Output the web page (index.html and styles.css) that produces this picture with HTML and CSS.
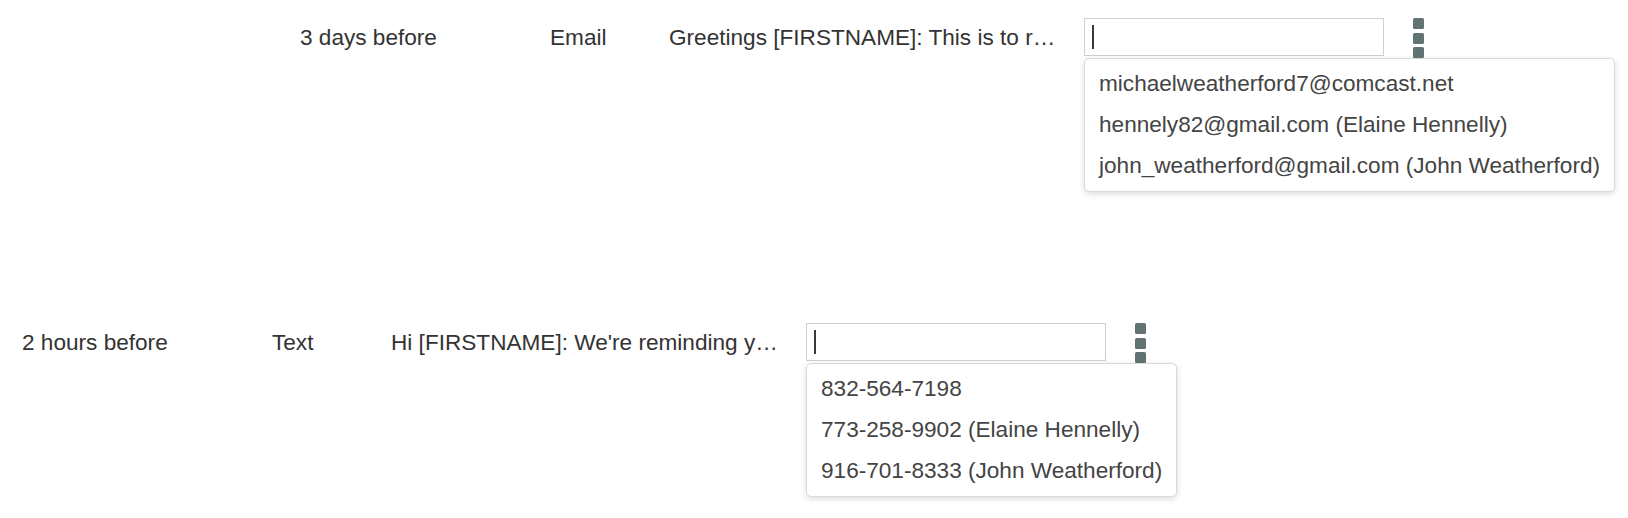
FILE: index.html
```html
<!DOCTYPE html>
<html lang="en">
<head>
<meta charset="utf-8">
<title>Reminders</title>
<link rel="stylesheet" href="styles.css">
</head>
<body>
<div class="list">
  <div class="reminder reminder--indent">
    <div class="cell when">3 days before</div>
    <div class="cell kind">Email</div>
    <div class="cell msg">Greetings [FIRSTNAME]: This is to remind you of your upcoming appointment.</div>
    <div class="recipient">
      <div class="field"><span class="caret"></span></div>
      <ul class="suggest">
        <li class="suggest-item">michaelweatherford7@comcast.net</li>
        <li class="suggest-item">hennely82@gmail.com (Elaine Hennelly)</li>
        <li class="suggest-item">john_weatherford@gmail.com (John Weatherford)</li>
      </ul>
    </div>
    <div class="menu"><span class="dot"></span><span class="dot"></span><span class="dot"></span></div>
  </div>
  <div class="reminder">
    <div class="cell when">2 hours before</div>
    <div class="cell kind">Text</div>
    <div class="cell msg">Hi [FIRSTNAME]: We're reminding you of your appointment today.</div>
    <div class="recipient">
      <div class="field"><span class="caret"></span></div>
      <ul class="suggest">
        <li class="suggest-item">832-564-7198</li>
        <li class="suggest-item">773-258-9902 (Elaine Hennelly)</li>
        <li class="suggest-item">916-701-8333 (John Weatherford)</li>
      </ul>
    </div>
    <div class="menu"><span class="dot"></span><span class="dot"></span><span class="dot"></span></div>
  </div>
</div>
</body>
</html>
```
FILE: styles.css
```css
html, body {
  margin: 0;
  padding: 0;
  background: #ffffff;
  min-height: 100%;
}
body {
  font-family: "Liberation Sans", Arial, sans-serif;
  font-size: 22.6px;
  color: #333333;
  min-height: 518px;
}
.list {
  display: flex;
  flex-direction: column;
  gap: 267px;
  padding: 18px 0 160px 22px;
}
.reminder {
  display: flex;
  align-items: flex-start;
  height: 38px;
}
.reminder--indent {
  margin-left: 278px;
}
.cell {
  padding-top: 7px;
  line-height: 26px;
  white-space: nowrap;
  flex: none;
}
.when { width: 250px; }
.kind { width: 119px; }
.msg {
  width: 389px;
  margin-right: 26px;
  overflow: hidden;
  text-overflow: ellipsis;
}
.recipient {
  position: relative;
  flex: none;
  width: 300px;
}
.field {
  box-sizing: border-box;
  width: 300px;
  height: 38px;
  border: 1px solid #cfcfcf;
  background: #fff;
  padding: 6px 7px;
}
.caret {
  display: block;
  width: 2px;
  height: 24px;
  background: #3a3a3a;
}
.suggest {
  position: absolute;
  top: calc(100% + 2px);
  left: 0;
  z-index: 2;
  margin: 0;
  padding: 4px 0 5px;
  list-style: none;
  width: max-content;
  min-width: 100%;
  background: #fff;
  border: 1px solid #d9d9d9;
  border-radius: 5px;
  box-shadow: 0 2px 6px rgba(0, 0, 0, 0.14);
  color: #444444;
}
.suggest-item {
  padding: 0 14px;
  line-height: 41px;
  white-space: nowrap;
}
.menu {
  flex: none;
  margin-left: 29px;
  display: flex;
  flex-direction: column;
  gap: 3.7px;
}
.dot {
  display: block;
  width: 11px;
  height: 11px;
  border-radius: 1.5px;
  background: #627373;
}
```
